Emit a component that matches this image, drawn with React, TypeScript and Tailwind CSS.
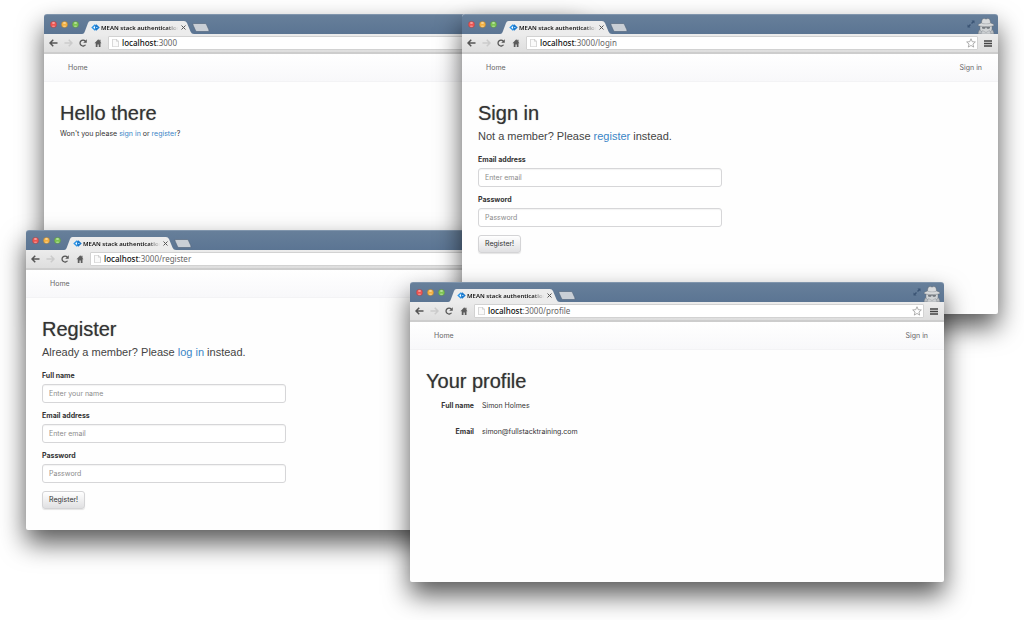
import React, { useId } from "react";

function Dot({ color }: { color: string }) {
  return (
    <svg viewBox="0 0 14 14" className="size-[7px]" aria-hidden="true">
      <circle cx="7" cy="7" r="6.5" fill={color} stroke="#3d4c5e" strokeOpacity="0.5" strokeWidth="1" />
      <ellipse cx="7" cy="4" rx="3.2" ry="1.6" fill="#ffffff" fillOpacity="0.6" />
      <ellipse cx="7" cy="10.6" rx="3.4" ry="1.6" fill="#ffffff" fillOpacity="0.35" />
    </svg>
  );
}

function Favicon() {
  return (
    <svg viewBox="0 0 18 14" className="h-[7px] w-[9px] shrink-0" aria-hidden="true">
      <path d="M7.500 0.500 0.500 7l7 6.500 2-2V2.500z" fill="#2a93e6" />
      <path d="M10.500 0.500 17.500 7l-7 6.500-2-2V2.500z" fill="#1a78cc" />
      <path d="M8 4 4.500 7 8 10z" fill="#ffffff" />
      <path d="M10 6h3v2h-3z" fill="#8fd0ff" />
    </svg>
  );
}

function Spy() {
  return (
    <svg viewBox="0 0 36 32" className="h-4 w-[18px]" aria-hidden="true">
      <path d="M2 32c0-6 3-10 8-11h16c5 1 8 5 8 11z" fill="#b9bdc1" stroke="#66717b" strokeWidth="1" />
      <path d="M6 14h24v8c0 4-6 8-12 8S6 26 6 22z" fill="#d0d3d5" stroke="#66717b" strokeWidth="0.800" />
      <path d="M9 10c0-6 2-9 5-9 2 0 3 1.200 4 1.200S20 1 22 1c3 0 5 3 5 9 4 1 7 2.500 7 4.500 0 1.500-7 2.500-16 2.500S2 16 2 14.500C2 12.500 5 11 9 10z" fill="#d9dbdd" stroke="#5b6269" strokeWidth="0.900" />
      <path d="M9 9.500c6 1.800 12 1.800 18 0v1.800c-6 1.800-12 1.800-18 0z" fill="#b0b4b8" />
      <path d="M10 18.500h6.500l1.500 1 1.500-1H26v1c0 2-6 2.500-7 0.500h-2c-1 2-7 1.500-7-0.500z" fill="#555c63" />
      <path d="m11 25 7 4 7-4 3 7H8z" fill="#cdd0d3" stroke="#8a9096" strokeWidth="0.800" />
    </svg>
  );
}

function TitleBar({ incognito }: { incognito: boolean }) {
  return (
    <div className="flex h-5 items-end justify-between rounded-t-[3px] border-t border-[#8095ac] bg-gradient-to-b from-[#677f9a] to-[#5b7593] pr-[3px] pl-1.5">
      <div className="flex items-end">
        <div className="flex h-4 items-start gap-1 pt-[3px]">
          <Dot color="#ee5450" />
          <Dot color="#f3b03f" />
          <Dot color="#7cc451" />
        </div>
        <div className="relative ml-[3px] h-[13px] w-28">
          <svg viewBox="0 0 112 13" className="absolute inset-0 size-full" aria-hidden="true">
            <path d="M0 13C2 13 2.500 11.500 3 10L6 2Q6.700 0 8.500 0H102Q104 0 105 2L108.500 10.500Q109.500 13 112 13Z" fill="#ececec" />
          </svg>
          <div className="relative flex h-full items-center gap-[3px] pl-[9px]">
            <div className="flex items-center gap-px">
              <Favicon />
              <span className="w-[77px] bg-gradient-to-r from-[#111] from-85% to-transparent bg-clip-text font-['Noto_Sans','Open_Sans',sans-serif] text-[6px] leading-3 font-semibold whitespace-nowrap text-transparent">
                MEAN stack authentication
              </span>
            </div>
            <button type="button" aria-label="Close tab">
              <svg viewBox="0 0 10 10" className="size-[5px]" aria-hidden="true">
                <path d="M1 1l8 8M9 1l-8 8" stroke="#555" strokeWidth="2" />
              </svg>
            </button>
          </div>
        </div>
        <button type="button" aria-label="New tab" className="-ml-0.5 mb-0.5">
          <svg viewBox="0 0 18 9" className="h-[9px] w-[18px]" aria-hidden="true">
            <path d="M1.500 0.500H13q1 0 1.500 1L17 7q0.500 1.500-1 1.500H5q-1 0-1.500-1L1 2Q0.500 0.500 1.500 0.500Z" fill="#c9cfd6" stroke="#56697f" strokeWidth="0.700" />
          </svg>
        </button>
      </div>
      {incognito && (
        <div className="flex items-end gap-0.5">
          <svg viewBox="0 0 16 16" className="mb-1.5 size-2" aria-hidden="true">
            <path d="M9 1h6v6l-2-2-3 3-2-2 3-3zM7 15H1V9l2 2 3-3 2 2-3 3z" fill="#3b5474" />
          </svg>
          <Spy />
        </div>
      )}
    </div>
  );
}

function Toolbar({ path }: { path: string }) {
  return (
    <div className="flex h-5 items-center border-b-2 border-[#cdcdcd] bg-gradient-to-b from-[#ececec] to-[#dedede] pl-[5px]">
      <button type="button" aria-label="Back">
        <svg viewBox="0 0 18 16" className="h-2 w-[9px]" aria-hidden="true">
          <path d="M8.500 1.500 2 8l6.500 6.500M2.500 8H17" fill="none" stroke="#555" strokeWidth="3" />
        </svg>
      </button>
      <button type="button" aria-label="Forward" className="ml-1.5">
        <svg viewBox="0 0 18 16" className="h-2 w-[9px]" aria-hidden="true">
          <path d="M9.500 1.500 16 8l-6.500 6.500M15.500 8H1" fill="none" stroke="#cbcbcb" strokeWidth="3" />
        </svg>
      </button>
      <button type="button" aria-label="Reload" className="ml-1.5">
        <svg viewBox="0 0 16 16" className="size-2" aria-hidden="true">
          <path d="M13 11.500A6 6 0 1 1 12.500 4" fill="none" stroke="#555" strokeWidth="2.600" />
          <path d="M15.500 0.500V7.500H8.500z" fill="#555" />
        </svg>
      </button>
      <button type="button" aria-label="Home page" className="ml-[7px]">
        <svg viewBox="0 0 16 16" className="size-2" aria-hidden="true">
          <path d="M8.500 0.500 1 8.500H3.500V16h3.500v-5h2.500v5H13V8.500h2L13 6V1.500h-2.300v2z" fill="#5c5c5c" />
        </svg>
      </button>
      <div className="ml-1.5 flex h-3.5 flex-1 items-center rounded-[1px] border border-[#d2d2d2] bg-white pl-[3px]">
        <svg viewBox="0 0 14 16" className="h-2 w-[7px] shrink-0" aria-hidden="true">
          <path d="M1 0.500H9L13 4.500V15.500H1zM9 0.500V4.500H13" fill="#fafafa" stroke="#c0c0c0" strokeWidth="1.200" />
        </svg>
        <p className="ml-[3px] flex-1 font-['Noto_Sans','Open_Sans',sans-serif] text-[8px] leading-3 text-[#666]">
          <span className="font-medium text-[#111]">localhost</span>:3000{path}
        </p>
        <svg viewBox="0 0 20 20" className="mr-px size-2.5" aria-hidden="true">
          <path d="m10 1.500 2.500 5.900 6.200.5-4.800 4.100 1.500 6.200L10 14.900l-5.400 3.300 1.500-6.200L1.300 7.900l6.200-.5z" fill="#fff" stroke="#888" strokeWidth="1.300" />
        </svg>
      </div>
      <button type="button" aria-label="Browser menu" className="flex w-5 justify-center">
        <svg viewBox="0 0 16 14" className="h-[7px] w-2" aria-hidden="true">
          <path d="M0 1.800h16M0 7h16M0 12.200h16" stroke="#444" strokeWidth="3" />
        </svg>
      </button>
    </div>
  );
}

type WindowProps = {
  place: string;
  path: string;
  title: string;
  signedOut?: boolean;
  children: React.ReactNode;
};

function BrowserWindow({ place, path, title, signedOut = false, children }: WindowProps) {
  return (
    <section
      aria-label={title}
      className={`absolute flex h-[300px] flex-col rounded-t-[3px] rounded-b-[2px] bg-[#fefefe] shadow-[0_13px_26px_rgba(0,0,0,0.66)] ${place}`}
    >
      <TitleBar incognito={signedOut} />
      <Toolbar path={path} />
      <nav className="flex h-7 items-center justify-between border-b border-[#f3f3f5] bg-gradient-to-b from-white to-[#f8f8fa] pr-4 pl-6 text-[#666]">
        <a href="#home">Home</a>
        {signedOut && <a href="#signin">Sign in</a>}
      </nav>
      <main className="flex flex-col items-start px-4 pt-[19px]">
        <h1 className="font-['Liberation_Sans',Arial,sans-serif] text-[20px] leading-6 text-[#333] [text-shadow:0_0_1px_rgba(51,51,51,0.55)]">
          {title}
        </h1>
        {children}
      </main>
    </section>
  );
}

function Lead({ children }: { children: React.ReactNode }) {
  return (
    <p className="mt-[3px] font-['Liberation_Sans',Arial,sans-serif] text-[11px] leading-4 text-[#444]">{children}</p>
  );
}

function Link({ href, children }: { href: string; children: React.ReactNode }) {
  return <a href={href} className="text-[#3a85c6]">{children}</a>;
}

type FieldData = { label: string; hint: string; type: string };

function Form({ fields }: { fields: FieldData[] }) {
  const id = useId();
  return (
    <form className="mt-[11px] flex w-[244px] flex-col items-start gap-2" onSubmit={(e) => e.preventDefault()}>
      {fields.map((f) => (
        <div key={f.label} className="flex w-full flex-col gap-[3px]">
          <label htmlFor={id + f.label} className="leading-[10px] font-bold">{f.label}</label>
          <input
            id={id + f.label}
            type={f.type}
            placeholder={f.hint}
            className="h-[19px] w-full rounded-[3px] border border-[#d6d6d8] bg-white px-1.5 shadow-[inset_0_1px_1px_rgba(0,0,0,0.05)] placeholder:text-[#8c8c8c]"
          />
        </div>
      ))}
      <button
        type="submit"
        className="h-[18px] rounded-[3px] border border-[#d4d4d6] bg-gradient-to-b from-white to-[#e0e0e2] px-1.5 shadow-[0_1px_1px_rgba(0,0,0,0.1)]"
      >
        Register!
      </button>
    </form>
  );
}

const email: FieldData = { label: "Email address", hint: "Enter email", type: "email" };
const password: FieldData = { label: "Password", hint: "Password", type: "password" };
const fullName: FieldData = { label: "Full name", hint: "Enter your name", type: "text" };

export default function App() {
  return (
    <div className="relative min-h-screen overflow-hidden bg-white font-[Inter,'Liberation_Sans',Arial,sans-serif] text-[7px] leading-3 text-[#333]">
      <BrowserWindow place="left-[44px] top-[14px] w-[536px]" path="" title="Hello there">
        <p className="mt-[3px]">
          Won't you please <Link href="#signin">sign in</Link> or <Link href="#register">register</Link>?
        </p>
      </BrowserWindow>

      <BrowserWindow place="left-[26px] top-[230px] w-[534px]" path="/register" title="Register">
        <Lead>Already a member? Please <Link href="#login">log in</Link> instead.</Lead>
        <Form fields={[fullName, email, password]} />
      </BrowserWindow>

      <BrowserWindow place="left-[462px] top-[14px] w-[536px]" path="/login" title="Sign in" signedOut>
        <Lead>Not a member? Please <Link href="#register">register</Link> instead.</Lead>
        <Form fields={[email, password]} />
      </BrowserWindow>

      <BrowserWindow place="left-[410px] top-[282px] w-[534px]" path="/profile" title="Your profile" signedOut>
        <dl className="mt-[7px] grid grid-cols-[48px_auto] gap-x-2 gap-y-3.5">
          <dt className="text-right font-bold">Full name</dt>
          <dd>Simon Holmes</dd>
          <dt className="text-right font-bold">Email</dt>
          <dd>simon@fullstacktraining.com</dd>
        </dl>
      </BrowserWindow>
    </div>
  );
}
